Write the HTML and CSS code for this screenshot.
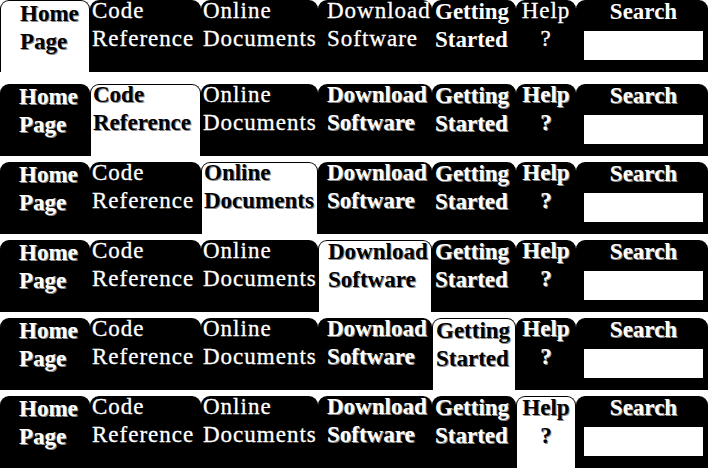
FILE: index.html
```html
<!DOCTYPE html>
<html>
<head>
<meta charset="utf-8">
<title>Tabs</title>
<link rel="stylesheet" href="styles.css">
</head>
<body>
<div class="stack">

  <nav class="tabs tabs--first">
    <a class="tab col-home tab--active"><span class="label">Home<br>Page</span></a>
    <a class="tab col-code"><span class="label">Code<br>Reference</span></a>
    <a class="tab col-online"><span class="label">Online<br>Documents</span></a>
    <a class="tab col-download"><span class="label">Download<br>Software</span></a>
    <a class="tab col-getting tab--bold"><span class="label">Getting<br>Started</span></a>
    <a class="tab col-help"><span class="label">Help<br>?</span></a>
    <div class="tab col-search tab--bold"><span class="label">Search</span><input class="search-box" type="text"></div>
  </nav>

  <nav class="tabs tabs--second">
    <a class="tab col-home tab--bold tab--shadow"><span class="label">Home<br>Page</span></a>
    <a class="tab col-code tab--active"><span class="label">Code<br>Reference</span></a>
    <a class="tab col-online"><span class="label">Online<br>Documents</span></a>
    <a class="tab col-download tab--bold tab--shadow"><span class="label">Download<br>Software</span></a>
    <a class="tab col-getting tab--bold tab--shadow"><span class="label">Getting<br>Started</span></a>
    <a class="tab col-help tab--bold tab--shadow"><span class="label">Help<br>?</span></a>
    <div class="tab col-search tab--bold tab--shadow"><span class="label">Search</span><input class="search-box" type="text"></div>
  </nav>

  <nav class="tabs">
    <a class="tab col-home tab--bold tab--shadow"><span class="label">Home<br>Page</span></a>
    <a class="tab col-code"><span class="label">Code<br>Reference</span></a>
    <a class="tab col-online tab--active"><span class="label">Online<br>Documents</span></a>
    <a class="tab col-download tab--bold tab--shadow"><span class="label">Download<br>Software</span></a>
    <a class="tab col-getting tab--bold tab--shadow"><span class="label">Getting<br>Started</span></a>
    <a class="tab col-help tab--bold tab--shadow"><span class="label">Help<br>?</span></a>
    <div class="tab col-search tab--bold tab--shadow"><span class="label">Search</span><input class="search-box" type="text"></div>
  </nav>

  <nav class="tabs">
    <a class="tab col-home tab--bold tab--shadow"><span class="label">Home<br>Page</span></a>
    <a class="tab col-code"><span class="label">Code<br>Reference</span></a>
    <a class="tab col-online"><span class="label">Online<br>Documents</span></a>
    <a class="tab col-download tab--active"><span class="label">Download<br>Software</span></a>
    <a class="tab col-getting tab--bold tab--shadow"><span class="label">Getting<br>Started</span></a>
    <a class="tab col-help tab--bold tab--shadow"><span class="label">Help<br>?</span></a>
    <div class="tab col-search tab--bold tab--shadow"><span class="label">Search</span><input class="search-box" type="text"></div>
  </nav>

  <nav class="tabs">
    <a class="tab col-home tab--bold tab--shadow"><span class="label">Home<br>Page</span></a>
    <a class="tab col-code"><span class="label">Code<br>Reference</span></a>
    <a class="tab col-online"><span class="label">Online<br>Documents</span></a>
    <a class="tab col-download tab--bold tab--shadow"><span class="label">Download<br>Software</span></a>
    <a class="tab col-getting tab--active"><span class="label">Getting<br>Started</span></a>
    <a class="tab col-help tab--bold tab--shadow"><span class="label">Help<br>?</span></a>
    <div class="tab col-search tab--bold tab--shadow"><span class="label">Search</span><input class="search-box" type="text"></div>
  </nav>

  <nav class="tabs">
    <a class="tab col-home tab--bold tab--shadow"><span class="label">Home<br>Page</span></a>
    <a class="tab col-code"><span class="label">Code<br>Reference</span></a>
    <a class="tab col-online"><span class="label">Online<br>Documents</span></a>
    <a class="tab col-download tab--bold tab--shadow"><span class="label">Download<br>Software</span></a>
    <a class="tab col-getting tab--bold tab--shadow"><span class="label">Getting<br>Started</span></a>
    <a class="tab col-help tab--active"><span class="label">Help<br>?</span></a>
    <div class="tab col-search tab--bold tab--shadow"><span class="label">Search</span><input class="search-box" type="text"></div>
  </nav>

</div>
</body>
</html>
```

FILE: styles.css
```css
html, body {
  margin: 0;
  padding: 0;
  background: #ffffff;
}

.stack {
  display: flex;
  flex-direction: column;
  gap: 6px;
  width: 708px;
}

.tabs {
  display: grid;
  grid-template-columns: 90px 111px 117px 114px 84px 60px 132px;
  height: 72px;
}

.tabs--second {
  margin-top: 6px;
}

.tab {
  box-sizing: border-box;
  display: block;
  height: 72px;
  background: #000000;
  color: #ffffff;
  border-radius: 9px 9px 0 0;
  font-family: "Liberation Serif", "Times New Roman", serif;
  font-size: 23px;
  line-height: 28px;
  letter-spacing: 1px;
  white-space: nowrap;
  text-decoration: none;
  cursor: pointer;
  -webkit-text-stroke: 0.3px #ffffff;
}

.label {
  display: block;
  margin-top: -3px;
}

.tab--bold {
  font-weight: bold;
  letter-spacing: 0;
  -webkit-text-stroke: 0;
}

.tab--shadow {
  text-shadow: 1px 1px 0 #8c8c8c;
}

.tab--active {
  background: #ffffff;
  color: #000000;
  border: 1px solid #000000;
  border-bottom: none;
  font-weight: bold;
  letter-spacing: 0;
  text-shadow: 1px 1px 0 #8c8c8c;
  -webkit-text-stroke: 0;
}

.tab--active .label {
  margin-top: -4px;
}

.col-home {
  padding-left: 19px;
}

.col-home .label {
  margin-top: -1px;
}

.col-code,
.col-online {
  padding-left: 2px;
}

.col-download {
  padding-left: 9px;
}

.col-download .label {
  margin-top: -3px;
}

.col-getting {
  padding-left: 3px;
}

.col-getting .label {
  margin-top: -2px;
}

.col-help {
  text-align: center;
}

.col-help .label {
  margin-top: -3px;
}

.col-search {
  display: flex;
  flex-direction: column;
  align-items: center;
  padding-left: 3px;
}

.col-search .label {
  margin-top: -2px;
}

.search-box {
  box-sizing: border-box;
  width: 119px;
  height: 29px;
  margin: 5px 0 0 0;
  padding: 0;
  border: 0;
  background: #ffffff;
  outline: none;
}
```
